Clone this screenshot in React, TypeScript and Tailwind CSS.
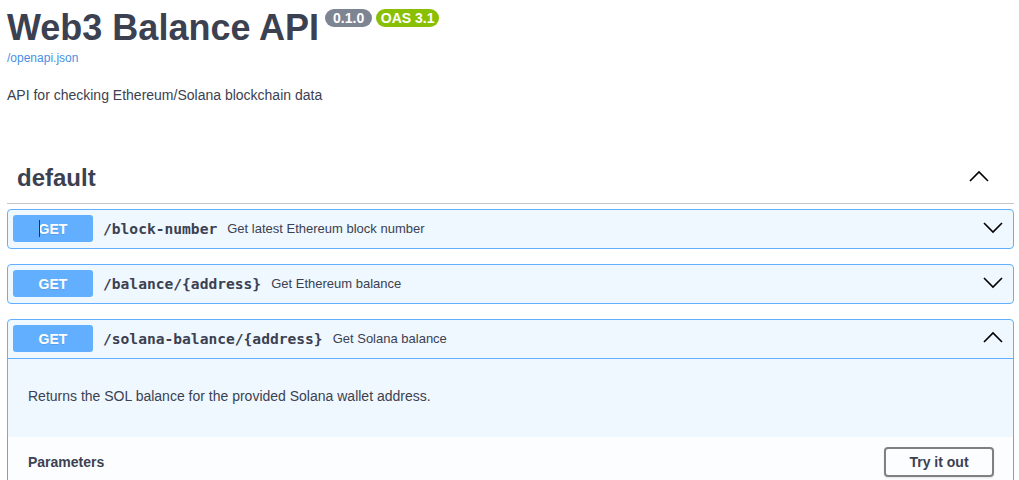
import React from "react";

const sans = { fontFamily: '"Liberation Sans", Arial, sans-serif' };

function Chevron({ up }: { up?: boolean }) {
    return (
        <svg width="20" height="20" viewBox="0 0 20 20" className="shrink-0">
            <polyline
                points={up ? "1,13 10,4 19,13" : "1,4 10,13 19,4"}
                fill="none"
                stroke="#000"
                strokeWidth="1.6"
            />
        </svg>
    );
}

interface OpProps {
    path: string;
    summary: string;
    open?: boolean;
    caret?: boolean;
}

function Operation({ path, summary, open, caret }: OpProps) {
    return (
        <div className="mb-[15px] rounded-[4px] border border-[#61affe] bg-[#eff7ff]">
            {/* Summary row */}
            <div
                className={`flex items-center pl-[5px] pr-[10px] pt-[5px] pb-[6px] ${
                    open ? "border-b border-[#61affe]" : ""
                }`}
            >
                <div className="relative flex h-[27px] w-[80px] shrink-0 items-center justify-center rounded-[3px] bg-[#61affe] pt-px text-[14px] font-bold text-white [text-shadow:0_1px_0_rgba(0,0,0,0.1)]">
                    GET
                    {caret && (
                        <span className="absolute left-[26px] top-[5px] h-[17px] w-px bg-[#2a3040]" />
                    )}
                </div>
                <span className="px-[10px] font-['DejaVu_Sans_Mono',monospace] text-[14.6px] font-bold text-[#3b4151]">
                    {path}
                </span>
                <span className="flex-1 text-[13px] text-[#3b4151]">{summary}</span>
                <Chevron up={open} />
            </div>

            {open && (
                <>
                    {/* Description */}
                    <div className="h-[78px] px-[20px] pt-[29px] text-[14px] leading-[16px] text-[#3b4151]">
                        Returns the SOL balance for the provided Solana wallet address.
                    </div>

                    {/* Parameters header */}
                    <div className="flex h-[50px] items-center justify-between bg-white/80 pl-[20px] pr-[19px] shadow-[0_1px_2px_rgba(0,0,0,0.1)]">
                        <span className="pt-px text-[14px] font-bold text-[#3b4151]">Parameters</span>
                        <button className="flex h-[30px] w-[110px] items-center justify-center rounded-[4px] border-2 border-[#808080] bg-transparent text-[14px] font-bold text-[#3b4151] shadow-[0_1px_2px_rgba(0,0,0,0.1)]">
                            Try it out
                        </button>
                    </div>
                </>
            )}
        </div>
    );
}

export default function App() {
    return (
        <div className="min-h-screen bg-white pl-[7px] pr-[5px] text-[#3b4151]" style={sans}>
            {/* Info */}
            <div className="flex items-start pt-[7px]">
                <h2 className="text-[36px] font-bold leading-[41px] text-[#3b4151]">
                    Web3 Balance API
                </h2>
                <div className="ml-[6px] mt-[2px] flex gap-[4px]">
                    <span className="flex h-[18px] w-[47px] items-center justify-center rounded-full bg-[#7d8492] text-[14px] font-bold text-white">
                        0.1.0
                    </span>
                    <span className="flex h-[18px] w-[63px] items-center justify-center rounded-full bg-[#89bf04] text-[14px] font-bold text-white">
                        OAS 3.1
                    </span>
                </div>
            </div>
            <a className="mt-[3px] block text-[12px] leading-[14px] text-[#4990e2]">/openapi.json</a>
            <p className="mt-[22px] text-[14px] leading-[16px] text-[#3b4151]">
                API for checking Ethereum/Solana blockchain data
            </p>

            {/* Tag section */}
            <div className="mt-[51px] flex items-center border-b border-[#c4c6cb] pl-[10px] pr-[25px] pt-[10px] pb-[11px]">
                <h3 className="flex-1 text-[24px] font-bold leading-[28px] text-[#3b4151]">default</h3>
                <Chevron up />
            </div>

            <div className="mt-[5px]">
                <Operation path="/block-number" summary="Get latest Ethereum block number" caret />
                <Operation path="/balance/{address}" summary="Get Ethereum balance" />
                <Operation path="/solana-balance/{address}" summary="Get Solana balance" open />
            </div>
        </div>
    );
}
